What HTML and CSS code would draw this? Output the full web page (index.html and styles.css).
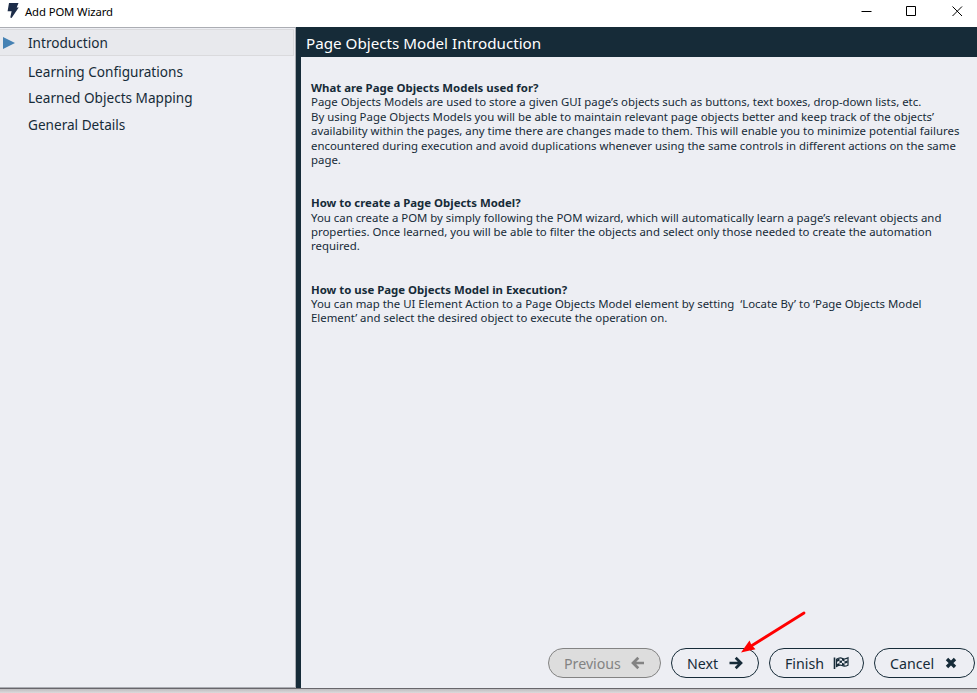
FILE: index.html
```html
<!DOCTYPE html>
<html lang="en">
<head>
<meta charset="utf-8">
<title>Add POM Wizard</title>
<link rel="stylesheet" href="styles.css">
</head>
<body>
<div class="window">
  <header class="titlebar">
    <svg class="bolt" width="12" height="17" viewBox="0 0 12 17"><path d="M2 1h9.5L9.7 5.4h2L4.6 16l-1.3-.4L4.6 9.2H.6z" fill="#1d2d49"/></svg>
    <span class="app-name">Add POM Wizard</span>
    <svg class="controls" width="110" height="24" viewBox="0 0 110 24" fill="none" stroke="#000" stroke-width="1">
      <path d="M.5 11.5h10M45.500 6.500h9v9h-9zM91.500 6.500l9.500 9.500M101 6.500l-9.500 9.500"/>
    </svg>
  </header>
  <main class="body">
    <nav class="sidebar">
      <div class="step current"><svg class="marker" width="13" height="12" viewBox="0 0 13 12"><path d="M0 0l12 6-12 6z" fill="#4682b4"/></svg><span class="s1">Introduction</span></div>
      <div class="step"><span class="s2">Learning Configurations</span></div>
      <div class="step"><span class="s3">Learned Objects Mapping</span></div>
      <div class="step"><span class="s4">General Details</span></div>
    </nav>
    <section class="page">
      <h1><span>Page Objects Model Introduction</span></h1>
      <div class="content">
        <section class="topic">
          <h2>What are Page Objects Models used for?</h2>
          <p>Page Objects Models are used to store a given GUI page’s objects such as buttons, text boxes, drop-down lists, etc.</p>
          <p>By using Page Objects Models you will be able to maintain relevant page objects better and keep track of the objects’<br>availability within the pages, any time there are changes made to them. This will enable you to minimize potential failures<br>encountered during execution and avoid duplications whenever using the same controls in different actions on the same<br>page.</p>
        </section>
        <section class="topic">
          <h2>How to create a Page Objects Model?</h2>
          <p>You can create a POM by simply following the POM wizard, which will automatically learn a page’s relevant objects and<br>properties. Once learned, you will be able to filter the objects and select only those needed to create the automation<br>required.</p>
        </section>
        <section class="topic">
          <h2>How to use Page Objects Model in Execution?</h2>
          <p>You can map the UI Element Action to a Page Objects Model element by setting&nbsp; ‘Locate By’ to ‘Page Objects Model<br>Element’ and select the desired object to execute the operation on.</p>
        </section>
      </div>
      <footer class="actions">
        <button class="btn previous" disabled><span>Previous</span><svg width="14" height="14" viewBox="0 0 14 14"><path d="M13 7H2.500M7.300 1.700L2 7l5.300 5.300" fill="none" stroke="#838383" stroke-width="2.700"/></svg></button>
        <button class="btn next"><span>Next</span><svg width="14" height="14" viewBox="0 0 14 14"><path d="M.5 7H11.500M6.700 1.700L12 7l-5.300 5.300" fill="none" stroke="#162b38" stroke-width="2.700"/></svg></button>
        <button class="btn finish"><span>Finish</span><svg width="16" height="14" viewBox="0 0 16 14"><path d="M1.500 1.500V13" stroke="#162b38" stroke-width="1.600"/><path d="M3.500 3.200C6 1.500 8 1.500 9.500 2.500s3.200.6 5.500-.7v7.400c-2.500 1.300-4.300 1.300-5.800.4s-3.200-.5-5.700.9z" fill="none" stroke="#162b38" stroke-width="1.200"/><path d="M4 3.500l2.500-1v2.300L4 5.800zM6.500 4.800L9 4.500v2.300l-2.500.3zM9 2.500l2.500.7v2.300L9 4.500zM11.500 5.500L14.500 4.500v2.300l-3 .9zM4 8l2.500-.9v2L4 10zM9 6.800l2.500.9v2.200L9 9.300z" fill="#162b38"/></svg></button>
        <button class="btn cancel"><span>Cancel</span><svg width="12" height="12" viewBox="0 0 12 12"><path d="M2 2l8 8M10 2l-8 8" stroke="#162b38" stroke-width="3.400"/></svg></button>
      </footer>
    </section>
  </main>
  <div class="shadow"></div>
  <svg class="pointer" width="66" height="44" viewBox="0 0 66 44"><path d="M64 2L12 34.500" stroke="#f00" stroke-width="2.800" stroke-linecap="round"/><path d="M1 41.500L9.500 29.500l1.800 4.300 4.200 4.400z" fill="#f00"/></svg>
</div>
</body>
</html>
```

FILE: styles.css
```css
* { box-sizing: border-box; }
body { margin: 0; overflow: hidden; font-family: "Noto Sans", "Open Sans", sans-serif; color: #162b38; }
.window { position: relative; width: 977px; height: 693px; display: flex; flex-direction: column; background: #fff; }
.titlebar { height: 27px; flex: none; display: flex; align-items: flex-start; padding-left: 7px; }
.bolt { margin-top: 2px; }
.app-name { margin-left: 6px; font-size: 11.3px; line-height: 24px; letter-spacing: -.1px; color: #000; flex: 1; }
.controls { margin-right: 6px; }
.body { height: 661px; flex: none; display: flex; }
.sidebar { width: 296px; flex: none; background: #edeef3; border: solid #abadb3; border-width: 1px 1px 1px 0; }
.step { height: 26.5px; display: flex; align-items: center; padding-left: 28px; font-size: 13.6px; white-space: nowrap; }
.step.current { height: 27px; margin: 1px 1px 2px 0; padding-left: 3px; background: #e8e9ed; border: solid #dadadd; border-width: 1px 1px 1px 0; }
.marker { margin-right: 12px; flex: none; }
.page { flex: 1; display: flex; flex-direction: column; background: #edeef3; border-left: 5px solid #162b38; min-width: 0; }
h1 { margin: 0; height: 30px; flex: none; padding-left: 5px; background: #162b38; color: #fff; font-size: 15.2px; font-weight: 400; line-height: 32px; white-space: nowrap; }
.content { flex: 1; padding: 24px 0 0 10px; font-size: 11.4px; line-height: 14.4px; white-space: nowrap; }
.topic { margin-bottom: 28.8px; }
.topic h2 { margin: 0; font-size: 11.4px; line-height: 14.4px; font-weight: 700; }
.topic p { margin: 0; }
.actions { display: flex; gap: 10px; justify-content: flex-end; padding: 0 2px 10px 0; }
.btn { height: 30px; border: 1px solid #162b38; border-radius: 15px; background: transparent; color: #162b38; font: 14.2px "Noto Sans", sans-serif; padding: 0 0 0 15px; display: flex; align-items: center; justify-content: space-between; }
.previous { width: 113px; padding-right: 15px; background: #ddd; border-color: #838383; color: #838383; }
.next { width: 88px; padding-right: 15px; }
.finish { width: 95px; padding-right: 14px; }
.cancel { width: 101px; padding-right: 17px; }
.shadow { height: 5px; border-top: 1px solid #68666b; background: linear-gradient(#bebcbf, #dcdadc); }
.pointer { position: absolute; left: 740px; top: 611px; }
```
